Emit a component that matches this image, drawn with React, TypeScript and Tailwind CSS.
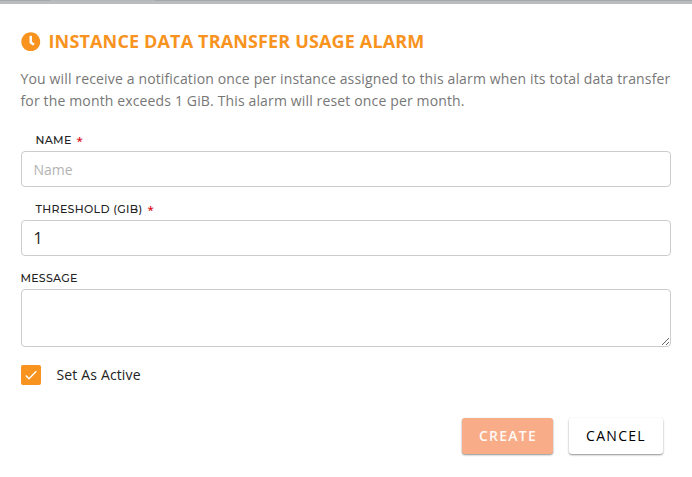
import React from "react";
import classNames from "clsx";
import {FaClock} from "react-icons/fa";

interface IFieldLabel {
  htmlFor: string;
  children: React.ReactNode;
  required?: boolean;
}

function FieldLabel(props: IFieldLabel) {
  const {htmlFor, children, required} = props;

  const className = classNames({
    "flex items-center h-[22px] -ml-[0.5px] font-['Montserrat','Inter',sans-serif] text-[11px] font-medium text-[#222222]": true,
    "pl-[15px]": required,
  });

  return (
    <label htmlFor={htmlFor} className={className}>
      {children}
      {required ? (
        <span className="ml-[5px] mt-[1px] font-['Open_Sans',sans-serif] text-[11.5px] font-semibold text-[#dd0a14]">
          *
        </span>
      ) : null}
    </label>
  );
}

const inputClassName =
  "block w-full h-9 px-[11.5px] rounded border border-[#cccccc] bg-white text-[#222222] placeholder:text-[#b3b3b3] outline-none";

function App() {
  return (
    <div className="w-full h-[477px] overflow-hidden bg-white font-['Open_Sans',sans-serif] text-[14px] text-[#222222]">
      <div className="h-1 bg-[#bbbcbe]">
        <div className="flex h-px">
          <div className="w-[50px] bg-[#a3a8ae]" />
          <div className="w-[105px] bg-[#b5b6b8]" />
          <div className="grow bg-[#a3a8ae]" />
        </div>
      </div>
      <div className="pl-[21px] pr-[21px]">
        <div className="flex items-center h-6 mt-[25px] text-[#f7931e]">
          <FaClock className="w-[19.5px] h-[19.5px] mt-px" />
          <h2 className="ml-[8px] -mt-px text-[18px] leading-6 font-bold whitespace-nowrap tracking-[0.15px]">
            INSTANCE DATA TRANSFER USAGE ALARM
          </h2>
        </div>
        <p className="mt-[15px] -ml-[0.5px] w-[654px] leading-[22px] tracking-[0.145px] text-[#777777]">
          You will receive a notification once per instance assigned to this alarm when its total data transfer
          <br />
          for the month exceeds 1 GiB. This alarm will reset once per month.
        </p>

        <div className="mt-[17px]">
          <FieldLabel htmlFor="name" required>
            <span className="tracking-[0.3px]">NAME</span>
          </FieldLabel>
          <input id="name" className={inputClassName} placeholder="Name" />
        </div>
        <div className="mt-[11px]">
          <FieldLabel htmlFor="threshold" required>
            <span className="tracking-[0.33px]">THRESHOLD (GIB)</span>
          </FieldLabel>
          <input id="threshold" className={classNames(inputClassName, "text-[16px]")} defaultValue="1" />
        </div>
        <div className="mt-[11px]">
          <FieldLabel htmlFor="message">
            <span className="tracking-[0.25px]">MESSAGE</span>
          </FieldLabel>
          <textarea
            id="message"
            className="block w-full h-[58px] px-3 rounded border border-[#cccccc] bg-white outline-none resize"
          />
        </div>

        <div className="flex items-center mt-[18px] h-5">
          <div className="flex items-center justify-center w-5 h-5 rounded-[2px] bg-[#f7931e]">
            <svg viewBox="0 0 20 20" className="w-5 h-5" fill="none" stroke="#ffffff" strokeWidth="1.4">
              <path d="M4.8 10.6 L8 13.7 L15.3 6.2" />
            </svg>
          </div>
          <span className="ml-[15.5px] -mt-[2px] tracking-[0.15px]">Set As Active</span>
        </div>

        <div className="flex justify-end gap-4 mt-[33px] pr-2">
          <button
            disabled
            className="w-[91px] h-9 pb-[2px] pl-[1px] rounded-[3px] bg-[#f8ac88] font-semibold tracking-[1.25px] text-[#fff8f4] shadow-[0_1px_2px_rgba(0,0,0,0.45)]"
          >
            CREATE
          </button>
          <button className="w-[94px] h-9 pb-[2px] rounded-[3px] bg-white font-medium tracking-[1.3px] text-black shadow-[0_1px_2px_rgba(0,0,0,0.45)]">
            CANCEL
          </button>
        </div>
      </div>
    </div>
  );
}

export default App;
